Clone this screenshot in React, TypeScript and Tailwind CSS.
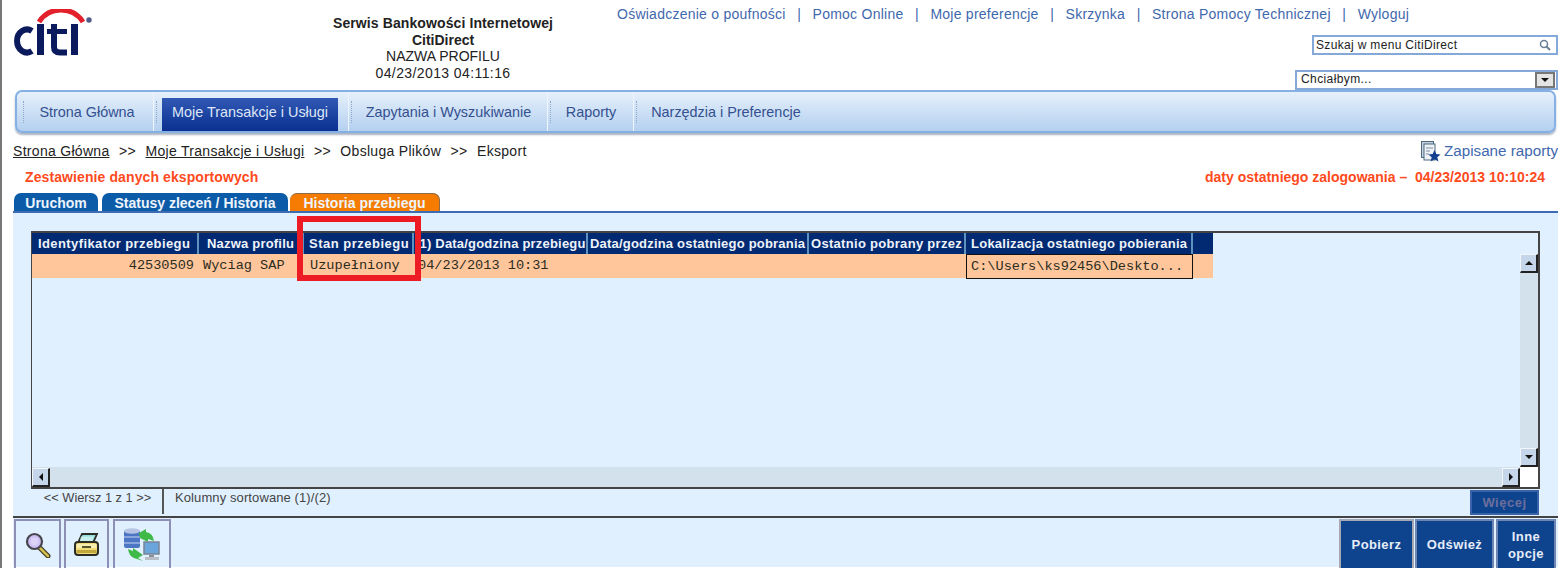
import React from "react";

const columns = [
  { label: "Identyfikator przebiegu", width: "w-[167px]", cls: "pl-[6px] tracking-[0.4px]" },
  { label: "Nazwa profilu", width: "w-[105px]", cls: "pl-[8px] tracking-[0.2px]" },
  { label: "Stan przebiegu", width: "w-[110px]", cls: "pl-[5px] tracking-[0.5px]" },
  { label: "(1) Data/godzina przebiegu", width: "w-[174px]", cls: "pl-[1px] tracking-[0.2px]" },
  { label: "Data/godzina ostatniego pobrania", width: "w-[221px]", cls: "pl-[2px] tracking-[0.2px]" },
  { label: "Ostatnio pobrany przez", width: "w-[157px]", cls: "pl-[2px] tracking-[0.3px]" },
  { label: "Lokalizacja ostatniego pobierania", width: "w-[227px]", cls: "pl-[5px] tracking-[0.25px]" },
];

function CitiLogo() {
  return (
    <svg width="82" height="48" viewBox="0 0 82 48">
      <path d="M26 13 C36 -3 60 -3 70 13" fill="none" stroke="#e3202c" strokeWidth="5" />
      <path d="M19 22 A10 11.5 0 1 0 19 42" fill="none" stroke="#0b1a5c" strokeWidth="6" />
      <rect x="24" y="15" width="7" height="31" fill="#0b1a5c" />
      <path d="M41 15 V38 Q41 43.5 47 43.5 H54" fill="none" stroke="#0b1a5c" strokeWidth="6" />
      <rect x="34" y="20" width="20" height="5" fill="#0b1a5c" />
      <rect x="58" y="15" width="7" height="31" fill="#0b1a5c" />
      <circle cx="76" cy="11" r="2.7" fill="#4f5b88" />
    </svg>
  );
}

function Grip({ line }: { line?: boolean }) {
  return (
    <div className={`flex h-full items-center ${line ? "border-l border-[#eef5fd] pl-[2px]" : ""}`}>
      <span className="h-[22px] w-0 border-l border-dotted border-[#8fa9c9]" />
    </div>
  );
}

function NavItem({ label, active, width, cls }: { label: string; active?: boolean; width: string; cls?: string }) {
  return (
    <div className={`flex h-full items-end ${width}`}>
      <div
        className={`flex h-[33px] w-full items-center justify-center pb-[3px] text-[14.4px] ${cls ?? ""} ${
          active ? "bg-gradient-to-b from-[#3159b4] to-[#0a2f90] text-[#dfe6f7]" : "text-[#34508f]"
        }`}
      >
        {label}
      </div>
    </div>
  );
}

function ArrowButton({ dir }: { dir: "up" | "down" | "left" | "right" }) {
  const pts = {
    up: "2,8 10,8 6,4",
    down: "2,4 10,4 6,8",
    left: "8,2 8,10 4,6",
    right: "4,2 4,10 8,6",
  }[dir];
  return (
    <div className="flex h-[19px] w-[18px] shrink-0 items-center justify-center border-t border-l border-t-[#f2f6fb] border-l-[#f2f6fb] border-r-2 border-b-2 border-r-[#222] border-b-[#222] bg-[#c5d5ea]">
      <svg width="12" height="12" viewBox="0 0 12 12">
        <polygon points={pts} fill="#111" />
      </svg>
    </div>
  );
}

function MagnifierIcon() {
  return (
    <svg width="26" height="26" viewBox="0 0 26 26">
      <path d="M15 16 L23 24" stroke="#3a3a20" strokeWidth="5" strokeLinecap="round" />
      <path d="M15 16 L23 24" stroke="#d3bf4e" strokeWidth="2.5" strokeLinecap="round" />
      <circle cx="9.5" cy="9.5" r="7.5" fill="#cdbff2" stroke="#45454d" strokeWidth="2.2" />
      <circle cx="9.5" cy="9.5" r="4" fill="#dcd3f8" />
    </svg>
  );
}

function PrinterIcon() {
  return (
    <svg width="25" height="23" viewBox="0 0 25 23">
      <path d="M8 1 H23 L19 10 H4 Z" fill="#8fdcd8" stroke="#2c2c24" strokeWidth="1.8" />
      <path d="M7 3.5 H20 L18 8 H6 Z" fill="#c8efec" />
      <path d="M4 9 H21 Q24 9 24 12 V19 Q24 22 21 22 H4 Q1 22 1 19 V12 Q1 9 4 9 Z" fill="#efdc78" stroke="#2c2c24" strokeWidth="2" />
      <rect x="2.5" y="11" width="20" height="4" fill="#f8ecae" />
      <rect x="2.5" y="17" width="20" height="3" fill="#c2a63c" />
      <rect x="8" y="13" width="9" height="2" fill="#55552f" />
    </svg>
  );
}

function NetworkIcon() {
  return (
    <svg width="36" height="34" viewBox="0 0 36 34">
      <rect x="0" y="2" width="16" height="18" rx="2" fill="#4c76c4" />
      <ellipse cx="8" cy="3" rx="8" ry="2.8" fill="#b8c4e4" />
      <rect x="0" y="8" width="16" height="2" fill="#8aa5dc" />
      <rect x="0" y="14" width="16" height="2" fill="#8aa5dc" />
      <path d="M15 5 L22 1 V4 Q29 5 30 13 L24 11 V14 L16 10 Z" fill="#3fb948" />
      <path d="M19 33 L10 30 Q5 28 4 21 L9 23 V20 L19 27 L14 30 Z" fill="#3fb948" />
      <rect x="20" y="14" width="15" height="12" fill="#6aa5dc" stroke="#7a8494" strokeWidth="1.5" />
      <rect x="25" y="27" width="5" height="2" fill="#8a8f98" />
      <rect x="21" y="29" width="14" height="3" fill="#b9bec6" />
    </svg>
  );
}

function ReportsIcon() {
  return (
    <svg width="20" height="21" viewBox="0 0 20 21">
      <rect x="0.5" y="0.5" width="12" height="16" fill="#c3d0de" stroke="#4f6880" />
      <rect x="3" y="3" width="11" height="16" fill="#eef2f6" stroke="#4f6880" />
      <path d="M5 7 H12 M5 10 H9 M5 13 H8" stroke="#7f8fa3" />
      <polygon points="13.5,9 15.3,13 19.6,13.4 16.3,16.2 17.4,20.4 13.5,18.2 9.6,20.4 10.7,16.2 7.4,13.4 11.7,13" fill="#123f8f" />
    </svg>
  );
}

function ToolButton({ width, cls, children }: { width: string; cls?: string; children: React.ReactNode }) {
  return (
    <div className={`flex h-full items-center justify-center border-2 border-b-0 border-[#8d8fb5] ${width} ${cls ?? ""}`}>{children}</div>
  );
}

function ActionButton({ width, cls, children }: { width: string; cls?: string; children: React.ReactNode }) {
  return (
    <div className={`flex h-full items-center justify-center border-2 border-b-0 bg-[#0e438e] text-center text-[13px] leading-[17px] font-bold tracking-[0.4px] text-[#e6edf8] ${width} ${cls ?? "border-[#6f86b3]"}`}>
      {children}
    </div>
  );
}

export default function App() {
  const links = [
    "Oświadczenie o poufności",
    "Pomoc Online",
    "Moje preferencje",
    "Skrzynka",
    "Strona Pomocy Technicznej",
    "Wyloguj",
  ];

  return (
    <div className="relative h-[568px] w-full overflow-hidden border-l-2 border-[#777] bg-white font-['Liberation_Sans',Arial,sans-serif] text-[#222]">
      {/* header */}
      <div className="flex h-[90px]">
        <div className="ml-[11px] w-[320px] pt-[9px]">
          <CitiLogo />
        </div>
        <div className="w-[220px] pt-[15px] text-center text-[14px] leading-[16.5px]">
          <p className="font-bold tracking-[0.1px] whitespace-nowrap">Serwis Bankowości Internetowej</p>
          <p className="font-bold">CitiDirect</p>
          <p>NAZWA PROFILU</p>
          <p className="tracking-[0.4px]">04/23/2013 04:11:16</p>
        </div>
        <div className="flex flex-1 flex-col items-end">
          <div className="flex w-full pt-[6px] pl-[64px] text-[14px] leading-[16px] tracking-[0.25px] whitespace-nowrap text-[#3f68ad]">
            {links.map((link, i) => (
              <span key={link} className="flex">
                {i > 0 && <span className="px-[11.5px]">|</span>}
                {link}
              </span>
            ))}
          </div>
          <div className="mt-[13px] flex h-[20px] w-[246px] items-center justify-between border-2 border-[#84a9d8] pr-[5px] pb-px pl-[2px] text-[12px] tracking-[0.33px]">
            <span>Szukaj w menu CitiDirect</span>
            <svg width="12" height="12" viewBox="0 0 12 12">
              <circle cx="5" cy="5" r="3.5" fill="none" stroke="#6c7f96" strokeWidth="1.5" />
              <path d="M7.5 7.5 L11 11" stroke="#6c7f96" strokeWidth="2" />
            </svg>
          </div>
          <div className="mt-[15px] flex h-[20px] w-[263px] items-center justify-between border-2 border-[#84a9d8] pr-px pl-[4px] text-[12px] tracking-[0.4px]">
            <span className="pb-[2px]">Chciałbym...</span>
            <div className="flex h-[16px] w-[20px] items-center justify-center border-2 border-[#777] bg-[#e4e4e4]">
              <svg width="10" height="6" viewBox="0 0 10 6">
                <polygon points="1,1 9,1 5,5" fill="#111" />
              </svg>
            </div>
          </div>
        </div>
      </div>

      {/* main nav */}
      <div className="ml-[13px] flex h-[43px] w-[1541px] items-center rounded-[7px] border-2 border-[#85b0e4] bg-gradient-to-b from-[#e6f0fb] to-[#b4d0ef] pl-[6px] shadow-[0_2px_2px_#aab4c0]">
        <Grip />
        <NavItem label="Strona Główna" width="w-[129px]" cls="pr-[3px]" />
        <Grip line />
        <div className="w-[5px]" />
        <NavItem label="Moje Transakcje i Usługi" active width="w-[176px]" />
        <div className="w-[10px]" />
        <Grip line />
        <NavItem label="Zapytania i Wyszukiwanie" width="w-[195px]" cls="pr-[2px]" />
        <Grip line />
        <NavItem label="Raporty" width="w-[82px]" cls="pr-[2px]" />
        <Grip line />
        <NavItem label="Narzędzia i Preferencje" width="w-[178px]" />
      </div>

      {/* breadcrumb */}
      <div className="mt-[9px] flex h-[18px] items-center justify-between pl-[11px] text-[14px] tracking-[0.3px] whitespace-nowrap">
        <div className="flex">
          <span className="underline">Strona Główna</span>
          <span className="px-[9.5px]">&gt;&gt;</span>
          <span className="underline">Moje Transakcje i Usługi</span>
          <span className="px-[9.5px]">&gt;&gt;</span>
          <span>Obsluga Plików</span>
          <span className="px-[9.5px]">&gt;&gt;</span>
          <span>Eksport</span>
        </div>
        <div className="flex items-center gap-[3px] text-[15.2px] tracking-normal text-[#3f68ad]">
          <ReportsIcon />
          <span>Zapisane raporty</span>
        </div>
      </div>

      <div className="mt-[9px] flex h-[16px] items-center justify-between pr-[13px] pl-[23px] text-[14px] font-bold whitespace-nowrap text-[#ff4a1c]">
        <span className="tracking-[0.1px]">Zestawienie danych eksportowych</span>
        <span>daty ostatniego zalogowania –&nbsp; 04/23/2013 10:10:24</span>
      </div>

      {/* tabs */}
      <div className="mt-[8px] flex h-[18px] items-end pl-[12px] text-[14px] leading-[18px] font-bold whitespace-nowrap text-[#eef4fb]">
        <div className="flex h-[18px] w-[84px] items-center justify-center rounded-t-[7px] bg-[#0b5ba8] pt-px">Uruchom</div>
        <div className="ml-[4px] flex h-[18px] w-[186px] items-center justify-center rounded-t-[7px] bg-[#0b5ba8] pt-px">Statusy zleceń / Historia</div>
        <div className="ml-[2px] flex h-[18px] w-[150px] items-center justify-center rounded-t-[7px] border-t border-r border-[#8c6a4a] bg-[#f57c00] pt-px">Historia przebiegu</div>
      </div>

      {/* content */}
      <div className="ml-[11px] flex h-[356px] flex-col border-t-2 border-[#3d6cb5] bg-[#e0f0ff]">
        <div className="mt-[18px] ml-[18px] flex h-[258px] w-[1509px] flex-col border-t-2 border-r-2 border-b-2 border-l border-[#444]">
          <div className="flex min-h-0 flex-1">
            <div className="min-w-0 flex-1">
              <div className="flex h-[21px] w-[1181px] bg-[#022a72] text-[13px] font-bold whitespace-nowrap text-[#eef3fa]">
                {columns.map((col) => (
                  <div key={col.label} className={`flex items-center overflow-hidden border-r-2 border-[#5e93bf] ${col.width} ${col.cls}`}>
                    {col.label}
                  </div>
                ))}
              </div>
              <div className="flex h-[24px] w-[1181px] bg-[#ffc69c] font-['Liberation_Mono',monospace] text-[13.6px] leading-[24px] text-[#2c2c1c]">
                <div className="w-[167px] pr-[5px] text-right">42530509</div>
                <div className="w-[105px] pl-[4px]">Wyciag SAP</div>
                <div className="w-[110px] pl-[6px]">Uzupełniony</div>
                <div className="w-[174px] pl-[4px]">04/23/2013 10:31</div>
                <div className="w-[221px]" />
                <div className="w-[157px]" />
                <div className="h-[25px] w-[227px] border border-[#111] pl-[4px] leading-[23px]">C:\Users\ks92456\Deskto...</div>
              </div>
            </div>
            <div className="flex w-[18px] flex-col pt-[21px]">
              <ArrowButton dir="up" />
              <div className="flex-1 bg-[#d3e1ed]" />
              <ArrowButton dir="down" />
            </div>
          </div>
          <div className="flex h-[20px]">
            <div className="flex flex-1 items-center bg-[#d3e1ed]">
              <ArrowButton dir="left" />
              <div className="flex-1" />
              <ArrowButton dir="right" />
            </div>
            <div className="w-[18px] bg-white" />
          </div>
        </div>

        {/* status line */}
        <div className="flex h-[27px] w-[1526px] text-[13px] leading-[18px] text-[#444]">
          <div className="flex h-[25px] w-[151px] justify-center border-r-2 border-[#555] pl-[20px] text-[12.8px] whitespace-nowrap">&lt;&lt; Wiersz 1 z 1 &gt;&gt;</div>
          <div className="flex-1 pl-[11px] tracking-[0.1px]">Kolumny sortowane (1)/(2)</div>
          <div className="mt-[1px] flex h-[25px] w-[69px] items-center justify-center border-2 border-[#3a62a8] bg-[#0e438e] text-[13px] font-bold tracking-[0.5px] text-[#6c6f9c]">Więcej</div>
        </div>

        {/* toolbar */}
        <div className="flex min-h-0 flex-1 items-stretch justify-between border-t-2 border-[#444] pt-px">
          <div className="flex h-[49px] gap-[3px] pl-[1px]">
            <ToolButton width="w-[47px]"><MagnifierIcon /></ToolButton>
            <ToolButton width="w-[45px]"><PrinterIcon /></ToolButton>
            <ToolButton width="w-[58px]" cls="ml-px"><NetworkIcon /></ToolButton>
          </div>
          <div className="flex h-[49px] gap-[1px] pr-[2px]">
            <ActionButton width="w-[75px]" cls="border-[#a8a8b4]">Pobierz</ActionButton>
            <ActionButton width="w-[79px]">Odśwież</ActionButton>
            <ActionButton width="w-[60px]" cls="ml-px border-[#6f86b3]"><span>Inne<br />opcje</span></ActionButton>
          </div>
        </div>
      </div>

      {/* red highlight over the Stan przebiegu column */}
      <div className="absolute top-[216px] left-[295px] h-[65px] w-[124px] border-[6px] border-[#ed1c24]" />
    </div>
  );
}
